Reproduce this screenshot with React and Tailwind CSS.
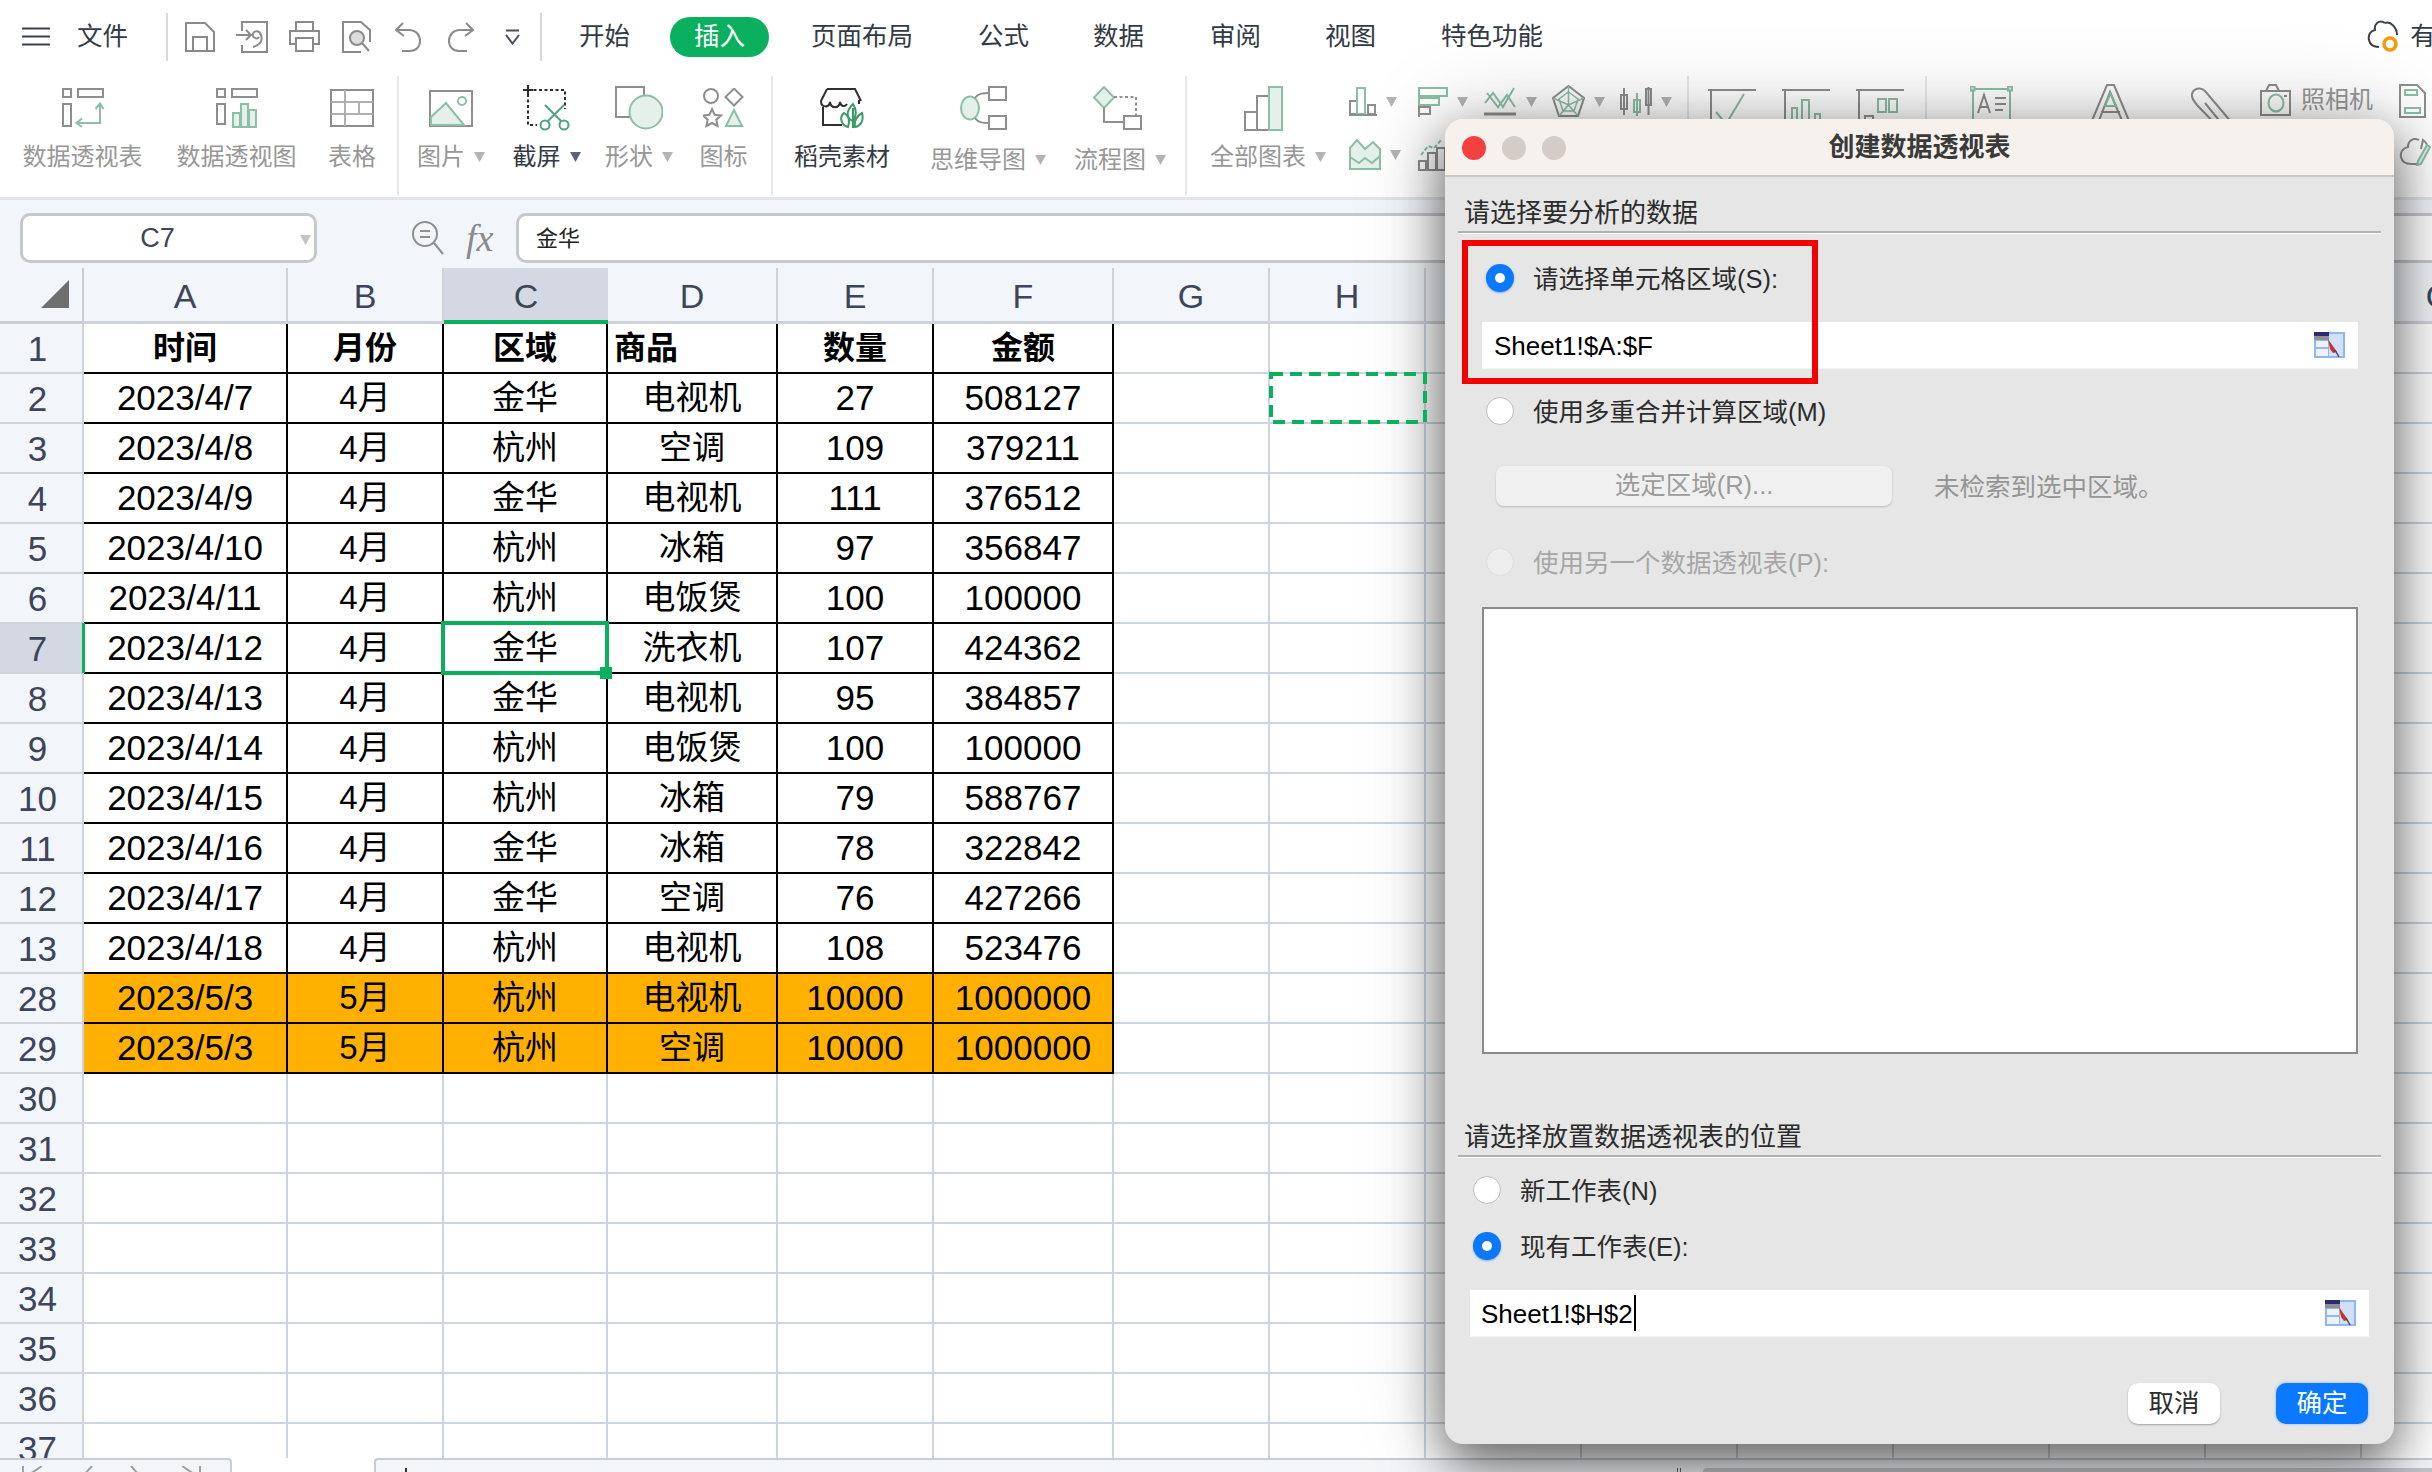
import React from 'react';

const G = '#8e8e8e', T = '#8cbfa6', F = '#e3f1ea';

const Ic = ({ w, h, sw = 2, stroke = G, children, className = '' }) => (
  <svg width={w} height={h} viewBox={`0 0 ${w} ${h}`} fill="none" stroke={stroke} strokeWidth={sw} className={`shrink-0 ${className}`}>{children}</svg>
);

const Arrow = ({ color = '#b4b4b4' }) => (
  <svg width="11" height="10" viewBox="0 0 11 10" className="shrink-0"><path d="M0 0H11L5.5 10Z" fill={color} /></svg>
);

const icons = {
  pivot: <Ic w={42} h={40}><rect x="1" y="1" width="8" height="8" /><rect x="16" y="1" width="25" height="8" /><rect x="1" y="16" width="8" height="22" /><g stroke={T}><path d="M38 16V35H15" /><path d="M33.500 21l4.500-5.500 3.500 5.500M20 30.500l-5.500 4.500 5.500 4" /></g></Ic>,
  pivotChart: <Ic w={42} h={40}><rect x="1" y="1" width="8" height="8" /><rect x="16" y="1" width="25" height="8" /><rect x="1" y="16" width="8" height="20" /><g stroke={T} fill={F}><rect x="17" y="25" width="7" height="14" /><rect x="25" y="16" width="7" height="23" /><rect x="33" y="22" width="7" height="17" /></g></Ic>,
  table: <Ic w={44} h={38}><rect x="1" y="1" width="42" height="36" /><path d="M1 13H43M1 25H43M15 1V37M29 13V25" stroke="#b0b0b0" /></Ic>,
  picture: <Ic w={44} h={37}><rect x="1" y="1" width="42" height="35" /><path d="M2 35V27L17 13L35 35Z" fill={F} stroke={T} /><circle cx="33" cy="11" r="4" stroke={T} /></Ic>,
  shot: <Ic w={47} h={46} stroke="#2b2b2b"><path d="M5 5H42V24M5 9V40H14" strokeDasharray="3 2.500" /><path d="M5 0V10M0 5H10" /><g stroke="#4fa37c"><circle cx="22" cy="40" r="4.500" /><circle cx="41" cy="40" r="4.500" /><path d="M25 36L41 20M38 36L22 20" /></g></Ic>,
  shape: <Ic w={48} h={44}><rect x="1" y="1" width="28" height="30" /><circle cx="31" cy="26" r="16.500" fill={F} stroke={T} /></Ic>,
  iconset: <Ic w={41} h={40}><circle cx="8" cy="8" r="7" /><path d="M31 0.500L39.500 9L31 17.500L22.500 9Z" /><path d="M9 21l2.700 5.800 6.300.7-4.700 4.200 1.300 6.300L9 35l-5.600 3 1.300-6.300L0 27.500l6.300-.7Z" /><path d="M31 22L39 38H23Z" stroke={T} fill={F} /></Ic>,
  daoke: <Ic w={44} h={41} stroke="#2f2f2f"><path d="M7 1H35L41 13M7 1L1 13C1 20 9 20 10 14C11 21 19 21 20 14C21 19 25 19 27 16" /><path d="M39 12V16M3 19V37H22" /><g stroke="#3c9a6a"><path d="M33 16C25 24 27 31 33 33C37 27 37 22 33 16ZM24 25C19 29 21 37 28 39C30 33 29 28 24 25ZM42 25C36 28 34 34 35 39C41 38 44 32 42 25Z" /><path d="M33 20V40" /></g></Ic>,
  mind: <Ic w={47} h={44} className="-translate-x-[5px]"><ellipse cx="10" cy="22" rx="9" ry="11.500" fill={F} stroke={T} /><rect x="29" y="1" width="17" height="13" /><rect x="29" y="30" width="17" height="13" /><path d="M15 12C18 7 24 7 29 7M15 32C18 37 24 37 29 37" /></Ic>,
  flow: <Ic w={49} h={44} className="-translate-x-[3px]"><path d="M11 1L21 11.500L11 22L1 11.500Z" fill={F} stroke={T} /><path d="M21 11H43V30" strokeDasharray="3 2.500" /><path d="M11 22V36H31" /><rect x="31" y="30" width="17" height="13" /></Ic>,
  all: <Ic w={40} h={45} className="-translate-x-[4px]"><rect x="1" y="26" width="12" height="18" /><rect x="13" y="10" width="13" height="34" /><rect x="25" y="1" width="13" height="43" fill={F} stroke={T} /></Ic>,
  bar: <Ic w={28} h={29}><rect x="1" y="14" width="7" height="13" /><rect x="8" y="1" width="8" height="26" stroke={T} /><rect x="19" y="18" width="7" height="9" /><path d="M0 28H28" /></Ic>,
  hbar: <Ic w={30} h={30}><path d="M1 0V30" /><rect x="1" y="1" width="28" height="8" stroke={T} /><rect x="1" y="11" width="20" height="7" stroke={T} /><rect x="1" y="20" width="11" height="7" /></Ic>,
  line: <Ic w={33} h={29}><path d="M1 16L9 6L19 20L30 1" stroke={T} /><path d="M3 6L14 20L23 8L31 20" stroke={T} /><path d="M0 27H32" strokeWidth="3" /></Ic>,
  radar: <Ic w={33} h={33}><path d="M16.500 1L32 13L26 31H7L1 13Z" /><path d="M16.500 7L26 14L22 26H11L7 14ZM16.500 1V20M1 13L16.500 20L32 13M7 31L16.500 20L26 31" stroke={T} strokeWidth="1.500" /></Ic>,
  candle: <Ic w={32} h={29}><rect x="1" y="8" width="6" height="14" /><path d="M4 1V28" /><rect x="14" y="13" width="6" height="12" stroke={T} /><path d="M17 6V29" stroke={T} /><rect x="26" y="2" width="5" height="16" /><path d="M28.500 0V28" /></Ic>,
  area: <Ic w={32} h={31} stroke={T}><path d="M1 30V9L8 1L16 10L24 3L31 10V30Z" fill={F} /><path d="M1 18L10 24L16 19L23 24L31 17" /></Ic>,
  combo: <Ic w={28} h={33}><rect x="1" y="23" width="7" height="9" /><rect x="10" y="15" width="8" height="17" /><rect x="19" y="10" width="8" height="22" /><path d="M3 17L10 8L16 10L24 1" stroke={T} strokeDasharray="4 2" /></Ic>,
  spark1: <Ic w={48} h={40}><path d="M0 2H48M3 2V40" /><path d="M8 24L18 36L36 6" stroke={T} /></Ic>,
  spark2: <Ic w={48} h={40}><path d="M0 2H48M3 2V40" /><path d="M10 40V20H15V40M20 40V12H27V40M33 40V26H38V40" stroke={T} /></Ic>,
  spark3: <Ic w={48} h={40}><path d="M0 2H48M3 2V40" /><rect x="9" y="28" width="8" height="11" /><rect x="22" y="11" width="8" height="13" stroke={T} /><rect x="33" y="11" width="8" height="13" stroke={T} /></Ic>,
  textbox: <Ic w={43} h={40} stroke={T}><rect x="3" y="3" width="37" height="37" /><rect x="0.500" y="0.500" width="4" height="4" fill={F} /><rect x="38" y="0.500" width="4" height="4" fill={F} /><path d="M8 27L14 9L20 27M10 21H18M25 12H36M25 18H36M25 24H33M8 34H36" stroke="#8e8e8e" /></Ic>,
  letterA: <Ic w={41} h={40}><path d="M1 39L17 1H24L40 39H33L20 8L8 39Z" /><path d="M11 28H30" stroke={G} /><path d="M15 22L20.500 9L26 22Z" stroke={T} /></Ic>,
  clip: <Ic w={48} h={40}><path d="M47 44L14 5C9 0 2 3 1 8C0 13 3 15 6 19L30 44M14 17L36 44" /></Ic>,
  camera: <Ic w={31} h={32}><rect x="1" y="7" width="29" height="24" /><path d="M6 7L9 1H16L19 7" /><ellipse cx="16" cy="19" rx="7.500" ry="8.500" stroke={T} /><path d="M24 12H27" /></Ic>,
  doc: <Ic w={27} h={36} stroke={T}><path d="M1 2H18L26 10V34H1Z" stroke={G} /><rect x="6" y="7" width="12" height="5" /><rect x="6" y="25" width="15" height="5" /></Ic>,
  cloudPen: <Ic w={33} h={28}><path d="M20 2C14 -1 9 3 9 9C4 10 1 14 2 19C3 24 7 26 12 26H18" /><path d="M22 11L24 2C27 4 29 7 28 11" /><path d="M28 7L31 9L22 26L18 27L19 23Z" stroke={T} fill={F} /></Ic>,
};

const RItem = ({ cls, label, arrow, dark, icon, low, arrowColor }) => (
  <div className={`flex shrink-0 flex-col items-center ${cls}`}>
    <div className="flex h-[48px] items-center justify-center">{icon}</div>
    <div className={`flex items-center gap-[9px] whitespace-nowrap text-[24px] leading-[30px] ${low ? 'mt-[13px]' : 'mt-[10px]'} ${dark ? 'text-[#333a46]' : 'text-[#979797]'}`}>
      <span>{label}</span>
      {arrow && <Arrow color={arrowColor} />}
    </div>
  </div>
);

const Sep = ({ cls }) => <div className={`mt-[4px] h-[119px] w-[2px] shrink-0 bg-[#e6e7e9] ${cls}`} />;

const Small = ({ icon, w = 'w-[68px]' }) => (
  <div className={`flex ${w} shrink-0 items-center gap-[9px]`}>
    {icon}
    <Arrow />
  </div>
);

const Ribbon = () => (
  <div className="flex h-[125px] shrink-0 items-start overflow-hidden bg-white">
    <RItem cls="ml-[23px] w-[119px] pt-[12px]" label="数据透视表" icon={icons.pivot} />
    <RItem cls="ml-[35px] w-[119px] pt-[12px]" label="数据透视图" icon={icons.pivotChart} />
    <RItem cls="ml-[33px] w-[46px] pt-[12px]" label="表格" icon={icons.table} />
    <Sep cls="ml-[22px]" />
    <RItem cls="ml-[19px] w-[66px] pt-[12px]" label="图片" arrow icon={icons.picture} />
    <RItem cls="ml-[29px] w-[67px] pt-[12px]" label="截屏" arrow dark arrowColor="#5c6278" icon={icons.shot} />
    <RItem cls="ml-[26px] w-[66px] pt-[12px]" label="形状" arrow icon={icons.shape} />
    <RItem cls="ml-[28px] w-[47px] pt-[12px]" label="图标" icon={icons.iconset} />
    <Sep cls="ml-[24px]" />
    <RItem cls="ml-[21px] w-[96px] pt-[12px]" label="稻壳素材" dark icon={icons.daoke} />
    <RItem cls="ml-[39px] w-[118px] pt-[12px]" label="思维导图" arrow low icon={icons.mind} />
    <RItem cls="ml-[26px] w-[94px] pt-[12px]" label="流程图" arrow low icon={icons.flow} />
    <Sep cls="ml-[18px]" />
    <RItem cls="ml-[22px] w-[118px] pt-[12px]" label="全部图表" arrow icon={icons.all} />
    <div className="ml-[22px] flex w-[338px] shrink-0 flex-col gap-[20px] pt-[13px]">
      <div className="flex items-center">
        <Small icon={icons.bar} w="w-[69px]" />
        <Small icon={icons.hbar} w="w-[66px]" />
        <Small icon={icons.line} />
        <Small icon={icons.radar} />
        <Small icon={icons.candle} />
      </div>
      <div className="flex items-center">
        <Small icon={icons.area} w="w-[69px]" />
        <Small icon={icons.combo} w="w-[66px]" />
      </div>
    </div>
    <Sep />
    <div className="ml-[19px] flex shrink-0 gap-[26px] pt-[16px]">
      {icons.spark1}{icons.spark2}{icons.spark3}
    </div>
    <Sep cls="ml-[21px]" />
    <div className="ml-[43px] shrink-0 pt-[14px]">{icons.textbox}</div>
    <div className="ml-[77px] shrink-0 pt-[12px]">{icons.letterA}</div>
    <div className="ml-[60px] shrink-0 pt-[14px]">{icons.clip}</div>
    <div className="ml-[21px] flex shrink-0 items-center gap-[10px] pt-[12px]">
      {icons.camera}
      <span className="whitespace-nowrap text-[24px] leading-[32px] text-[#979797]">照相机</span>
    </div>
    <div className="ml-[26px] flex shrink-0 flex-col gap-[19px] pt-[11px]">
      {icons.doc}
      {icons.cloudPen}
    </div>
  </div>
);

const TopBar = () => (
  <div className="flex h-[72px] shrink-0 items-center bg-white pt-[1px] text-[25.5px] text-[#333a46]">
    <svg width="28" height="19" viewBox="0 0 28 19" className="ml-[22px] shrink-0" stroke="#3a3f4a" strokeWidth="2" fill="none"><path d="M0 1.500H28M0 9.500H28M0 17.500H28" /></svg>
    <span className="ml-[27px] shrink-0 whitespace-nowrap">文件</span>
    <div className="ml-[38px] h-[48px] w-[2px] shrink-0 bg-[#d9dadc]" />
    <div className="ml-[6px] flex shrink-0 items-center">
      <div className="flex w-[52px] justify-center"><Ic w={30} h={30} stroke="#8a8a8a"><path d="M1 1H20L29 10V29H1Z" /><path d="M8 29V15H22V29" /></Ic></div>
      <div className="flex w-[52px] justify-center"><Ic w={32} h={32} stroke="#8a8a8a"><path d="M6 10V1H31V31H6V24" /><path d="M0 14H14M10 9L15 14L10 19" /><path d="M17 26C24 24 27 20 25 14C23 8 16 10 17 15C18 18 22 18 23 16" /></Ic></div>
      <div className="flex w-[52px] justify-center"><Ic w={31} h={31} stroke="#8a8a8a"><path d="M7 10V1H24V10" /><path d="M7 23H1V10H30V23H24" /><rect x="7" y="17" width="17" height="13" /></Ic></div>
      <div className="flex w-[52px] justify-center"><Ic w={29} h={32} stroke="#8a8a8a"><path d="M19 31H1V1H19L28 9V21" /><circle cx="15" cy="17" r="7" fill="#dcdcdc" /><path d="M20 22L27 30" /></Ic></div>
      <div className="flex w-[52px] justify-center"><Ic w={27} h={30} stroke="#8a8a8a"><path d="M8 1L1 8L9 14" /><path d="M2 8H14C21 8 25 13 25 19C25 25 21 29 15 29H7" /></Ic></div>
      <div className="flex w-[52px] justify-center"><Ic w={27} h={30} stroke="#8a8a8a"><path d="M19 1L26 8L18 14" /><path d="M25 8H13C6 8 2 13 2 19C2 25 6 29 12 29H20" /></Ic></div>
      <div className="flex w-[52px] justify-center"><Ic w={15} h={16} stroke="#4a4f5c"><path d="M1 1.500H14M1 6L7.500 14.500L14 6" /></Ic></div>
    </div>
    <div className="ml-[2px] h-[48px] w-[2px] shrink-0 bg-[#d9dadc]" />
    <span className="ml-[37px] shrink-0 whitespace-nowrap">开始</span>
    <span className="ml-[40px] flex h-[40px] w-[99px] shrink-0 items-center justify-center rounded-full bg-[#0bb05f] text-white">插入</span>
    <span className="ml-[42px] shrink-0 whitespace-nowrap">页面布局</span>
    <span className="ml-[65px] shrink-0 whitespace-nowrap">公式</span>
    <span className="ml-[64px] shrink-0 whitespace-nowrap">数据</span>
    <span className="ml-[66px] shrink-0 whitespace-nowrap">审阅</span>
    <span className="ml-[64px] shrink-0 whitespace-nowrap">视图</span>
    <span className="ml-[65px] shrink-0 whitespace-nowrap">特色功能</span>
    <svg width="34" height="34" viewBox="0 0 34 34" fill="none" className="ml-[824px] shrink-0"><path d="M18 3C12 -1 7 4 8 10C3 11 1 15 2 20C3 25 7 27 12 27M18 3C24 1 30 8 30 15" stroke="#3a3f4a" strokeWidth="2" /><circle cx="23" cy="24" r="6" stroke="#f59a0c" strokeWidth="3.500" /></svg>
    <span className="ml-[9px] shrink-0 whitespace-nowrap">有</span>
  </div>
);

const FormulaBar = () => (
  <div className="flex h-[71px] shrink-0 items-start border-t-[3px] border-[#e3e5e8] bg-[#f2f5f9] pt-[13px]">
    <div className="relative ml-[20px] flex h-[50px] w-[297px] shrink-0 items-center justify-center rounded-[10px] border-[3px] border-[#c6c8cc] bg-white pr-[22px] text-[27px] text-[#3d4559]">
      C7
      <span className="absolute right-[3px] top-[19px]"><Arrow color="#c4c4c4" /></span>
    </div>
    <svg width="34" height="34" viewBox="0 0 34 34" fill="none" stroke="#8f8f8f" strokeWidth="2" className="ml-[94px] mt-[8px] shrink-0"><circle cx="14" cy="13" r="12" /><path d="M23 22L32 33M9 10H19M9 16H19" /></svg>
    <span className="ml-[21px] mt-[3px] w-[30px] shrink-0 font-['Liberation_Serif',serif] text-[38px] leading-[44px] italic text-[#8a8a8a]">fx</span>
    <div className="ml-[20px] flex h-[50px] flex-1 items-center rounded-l-[10px] border-y-[3px] border-l-[3px] border-[#c6c8cc] bg-white pl-[17px] text-[22px] text-[#222]">金华</div>
  </div>
);

const cols = [
  ['A', 'w-[204px]'], ['B', 'w-[156px]'], ['C', 'w-[164px]'], ['D', 'w-[170px]'], ['E', 'w-[156px]'], ['F', 'w-[180px]'],
  ['G', 'w-[156px]'], ['H', 'w-[156px]'], ['I', 'w-[156px]'], ['J', 'w-[156px]'], ['K', 'w-[156px]'], ['L', 'w-[156px]'], ['M', 'w-[156px]'], ['N', 'w-[156px]'], ['O', 'w-[156px]'],
];

const data = [
  [1, '时间', '月份', '区域', '商品', '数量', '金额'],
  [2, '2023/4/7', '4月', '金华', '电视机', '27', '508127'],
  [3, '2023/4/8', '4月', '杭州', '空调', '109', '379211'],
  [4, '2023/4/9', '4月', '金华', '电视机', '111', '376512'],
  [5, '2023/4/10', '4月', '杭州', '冰箱', '97', '356847'],
  [6, '2023/4/11', '4月', '杭州', '电饭煲', '100', '100000'],
  [7, '2023/4/12', '4月', '金华', '洗衣机', '107', '424362'],
  [8, '2023/4/13', '4月', '金华', '电视机', '95', '384857'],
  [9, '2023/4/14', '4月', '杭州', '电饭煲', '100', '100000'],
  [10, '2023/4/15', '4月', '杭州', '冰箱', '79', '588767'],
  [11, '2023/4/16', '4月', '金华', '冰箱', '78', '322842'],
  [12, '2023/4/17', '4月', '金华', '空调', '76', '427266'],
  [13, '2023/4/18', '4月', '杭州', '电视机', '108', '523476'],
  [28, '2023/5/3', '5月', '杭州', '电视机', '10000', '1000000'],
  [29, '2023/5/3', '5月', '杭州', '空调', '10000', '1000000'],
  ...[30, 31, 32, 33, 34, 35, 36, 37].map((n) => [n]),
];

const HeaderRow = () => (
  <div className="flex h-[56px] shrink-0 text-[34px] text-[#3d4559]">
    <div className="flex w-[84px] shrink-0 items-end justify-end border-r-2 border-b-[3px] border-[#c9ccd2] bg-[#f2f5f9] pb-[13px] pr-[13px]">
      <svg width="28" height="28" viewBox="0 0 28 28"><path d="M28 0V28H0Z" fill="#6f6f6f" /></svg>
    </div>
    {cols.map(([l, w]) =>
      l === 'C' ? (
        <div key={l} className={`${w} flex shrink-0 items-center justify-center border-b-[4px] border-[#0bb05f] bg-[#d3d8e2] pt-[4px]`}>{l}</div>
      ) : (
        <div key={l} className={`${w} flex shrink-0 items-center justify-center border-r-2 border-b-[3px] border-[#cfd2d8] bg-[#f2f5f9] pt-[3px]`}>{l}</div>
      )
    )}
  </div>
);

const Row = ({ r }) => {
  const n = r[0];
  const filled = r.length > 1;
  const head = n === 1;
  const orange = n === 28 || n === 29;
  return (
    <div className="flex h-[50px] shrink-0">
      <div className={`flex w-[84px] shrink-0 items-center justify-center border-r-2 border-b-2 border-[#d0d3d8] pr-[7px] pt-[2px] text-[35px] text-[#3d4559] ${n === 7 ? 'bg-[#d3d8e2]' : 'bg-[#f2f5f9]'}`}>{n}</div>
      {cols.map(([l, w], i) => {
        const txt = filled ? r[i + 1] : undefined;
        if (filled && i < 6) {
          const numeric = /^[\d/]+$/.test(txt || '');
          return (
            <div key={l} className={`${w} relative flex shrink-0 items-center whitespace-nowrap border-r-2 border-b-2 border-black text-black ${head ? 'text-[32px] font-bold' : numeric ? 'text-[35px]' : 'text-[33px]'} ${head && l === 'D' ? 'justify-start pl-[6px]' : 'justify-center'} ${orange ? 'bg-[#ffb000]' : 'bg-white'}`}>
              {txt}
              {n === 7 && l === 'A' && <span className="absolute -left-[2px] -top-[1px] z-10 h-[50px] w-[3px] bg-[#0bb05f]" />}
              {n === 7 && l === 'C' && (
                <>
                  <span className="absolute -left-[3px] -top-[3px] z-10 h-[54px] w-[168px] border-[4px] border-[#0bb05f]" />
                  <span className="absolute -bottom-[7px] -right-[6px] z-10 h-[12px] w-[12px] bg-[#0bb05f]" />
                </>
              )}
            </div>
          );
        }
        return (
          <div key={l} className={`${w} relative shrink-0 border-r-2 border-b-2 border-[#cdd5e2] bg-white`}>
            {n === 2 && l === 'H' && (
              <svg width="158" height="52" viewBox="0 0 158 52" fill="none" className="absolute -left-[1px] -top-[2px] z-10">
                <rect x="2" y="2" width="154" height="48" stroke="#0bb05f" strokeWidth="4" strokeDasharray="12 7" />
              </svg>
            )}
          </div>
        );
      })}
    </div>
  );
};

const Grid = () => (
  <div className="flex h-[1190px] shrink-0 flex-col overflow-hidden">
    <HeaderRow />
    {data.map((r) => <Row key={r[0]} r={r} />)}
  </div>
);

const BottomBar = () => (
  <div className="flex h-[14px] shrink-0 overflow-hidden bg-white">
    <div className="h-[20px] w-[232px] shrink-0 rounded-tr-[4px] border-t-2 border-r-2 border-[#c9ccd2] bg-[#f2f5f9]">
      <svg width="210" height="20" viewBox="0 0 210 20" fill="none" stroke="#a0a0a0" strokeWidth="2" className="mt-[6px]"><path d="M23 0V14M42 0L30 8M92 0L83 10M131 0L140 10M182 0L194 8M200 0V14" /></svg>
    </div>
    <div className="ml-[142px] flex h-[20px] flex-1 rounded-tl-[4px] border-t-2 border-l-2 border-[#c9ccd2] bg-[#f2f5f9] pl-[29px] pt-[8px]">
      <span className="h-[8px] w-[2px] shrink-0 bg-[#333]" />
      <span className="ml-[1270px] h-[8px] w-[4px] shrink-0 border-x border-[#666]" />
      <span className="ml-[22px] h-[12px] flex-1 rounded-l-[4px] bg-[#c3c6cb]" />
    </div>
  </div>
);

const Radio = ({ on, disabled }) => (
  <span className={`flex h-[28px] w-[28px] shrink-0 items-center justify-center rounded-full ${on ? 'bg-[#0a78ff] shadow-[0_1px_2px_rgba(0,90,220,0.4)]' : disabled ? 'border border-[#dedede] bg-[#eeeeee]' : 'border border-[#bdbdbd] bg-white'}`}>
    {on && <span className="h-[10px] w-[10px] rounded-full bg-white" />}
  </span>
);

const RadioRow = ({ on, disabled, label, cls }) => (
  <div className={`flex h-[36px] shrink-0 items-center gap-[19px] ${cls}`}>
    <Radio on={on} disabled={disabled} />
    <span className={`mt-[2px] whitespace-nowrap text-[25.5px] ${disabled ? 'text-[#a6a6a6]' : 'text-[#2c2c2c]'}`}>{label}</span>
  </div>
);

const Picker = () => (
  <svg width="31" height="26" viewBox="0 0 31 26" className="shrink-0">
    <rect width="31" height="26" fill="#8fb8f2" />
    <rect x="15" y="2" width="14" height="22" fill="#cfe0f8" />
    <rect x="2" y="9" width="12" height="6" fill="#eef2f8" />
    <rect x="2" y="17" width="12" height="7" fill="#eef2f8" />
    <rect width="15" height="4" fill="#2d2a72" />
    <rect y="4" width="15" height="4" fill="#8f8f8f" />
    <path d="M14 7L23 20L19 21L16 17Z" fill="#c8322c" />
    <path d="M21 18L25 25" stroke="#4a4a4a" strokeWidth="1.500" />
  </svg>
);

const Divider = () => (
  <div className="ml-[13px] w-[923px] shrink-0">
    <div className="h-[2px] bg-[#b2b2b2]" />
    <div className="h-[1px] bg-white" />
  </div>
);

const Dialog = () => (
  <div className="absolute left-[1445px] top-[119px] flex h-[1325px] w-[949px] flex-col rounded-[18px] bg-[#e6e6e6] shadow-[0_20px_50px_rgba(0,0,0,0.55),0_0_90px_rgba(0,0,0,0.22)]">
    <div className="relative flex h-[58px] shrink-0 items-center justify-center rounded-t-[18px] border-b-2 border-[#c6c6c6] bg-[#f7f1ed] text-[26px] font-bold text-[#3a3a3a]">
      <div className="absolute left-[17px] top-[17px] flex gap-[16px]">
        <span className="h-[24px] w-[24px] rounded-full bg-[#f4403f]" />
        <span className="h-[24px] w-[24px] rounded-full bg-[#d3ccc7]" />
        <span className="h-[24px] w-[24px] rounded-full bg-[#d3ccc7]" />
      </div>
      <span>创建数据透视表</span>
    </div>
    <div className="ml-[19px] mt-[18px] h-[36px] shrink-0 text-[26px] leading-[36px] text-[#2c2c2c]">请选择要分析的数据</div>
    <Divider />
    <RadioRow on label="请选择单元格区域(S):" cls="ml-[41px] mt-[26px]" />
    <div className="ml-[37px] mt-[26px] flex h-[46px] w-[876px] shrink-0 items-center justify-between bg-white pl-[12px] pr-[13px] text-[26px] text-black shadow-[0_1px_0_#f4f4f4]">
      <span className="mt-[3px]">Sheet1!$A:$F</span>
      <Picker />
    </div>
    <RadioRow label="使用多重合并计算区域(M)" cls="ml-[41px] mt-[25px]" />
    <div className="ml-[51px] mt-[37px] flex h-[40px] shrink-0 items-center">
      <div className="flex h-[40px] w-[396px] shrink-0 items-center justify-center rounded-[8px] bg-[#f0f0f0] pb-[2px] text-[25.5px] text-[#9c9c9c] shadow-[0_1px_2px_rgba(0,0,0,0.2)]">选定区域(R)...</div>
      <span className="ml-[42px] mt-[3px] whitespace-nowrap text-[25.5px] text-[#959595]">未检索到选中区域。</span>
    </div>
    <RadioRow disabled label="使用另一个数据透视表(P):" cls="ml-[41px] mt-[38px]" />
    <div className="ml-[37px] mt-[27px] h-[447px] w-[876px] shrink-0 border-2 border-[#8a8a8a] bg-white" />
    <div className="ml-[19px] mt-[65px] h-[36px] shrink-0 text-[26px] leading-[36px] text-[#2c2c2c]">请选择放置数据透视表的位置</div>
    <Divider />
    <RadioRow label="新工作表(N)" cls="ml-[28px] mt-[14px]" />
    <RadioRow on label="现有工作表(E):" cls="ml-[28px] mt-[20px]" />
    <div className="ml-[25px] mt-[26px] flex h-[46px] w-[899px] shrink-0 items-center justify-between bg-white pl-[11px] pr-[13px] text-[26px] text-black shadow-[0_1px_0_#f4f4f4]">
      <span className="flex items-center"><span className="mt-[2px]">Sheet1!$H$2</span><span className="ml-[1px] h-[36px] w-[2px] bg-black" /></span>
      <Picker />
    </div>
    <div className="ml-[683px] mt-[47px] flex shrink-0 gap-[56px]">
      <button className="h-[41px] w-[92px] rounded-[10px] bg-white text-[25.5px] text-[#2c2c2c] shadow-[0_1px_2px_rgba(0,0,0,0.3)]">取消</button>
      <button className="h-[41px] w-[92px] rounded-[10px] bg-[#0a78ff] text-[25.5px] text-white shadow-[0_0_3px_rgba(60,150,255,0.6)]">确定</button>
    </div>
    <div className="absolute left-[17px] top-[121px] h-[144px] w-[356px] border-[6px] border-[#f50000]" />
  </div>
);

export default function App() {
  return (
    <div className="relative flex h-[1472px] w-[2432px] flex-col overflow-hidden bg-white font-['Liberation_Sans','Noto_Sans_CJK_SC',sans-serif]">
      <TopBar />
      <Ribbon />
      <FormulaBar />
      <Grid />
      <BottomBar />
      <Dialog />
    </div>
  );
}
